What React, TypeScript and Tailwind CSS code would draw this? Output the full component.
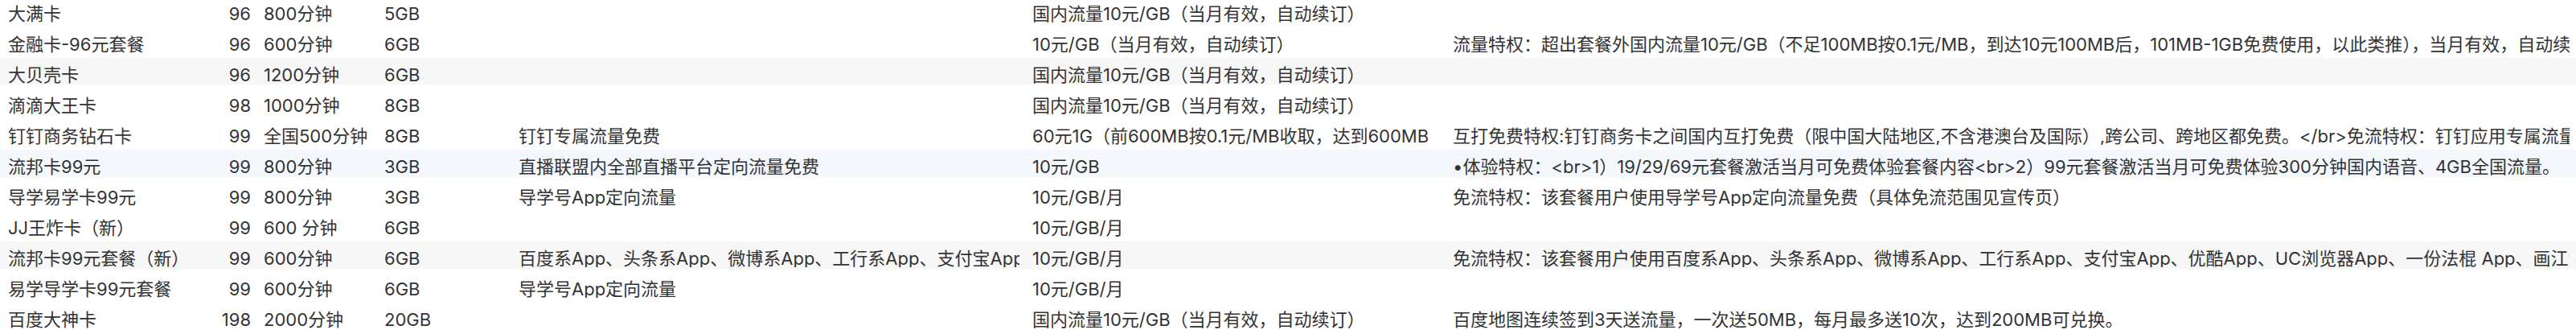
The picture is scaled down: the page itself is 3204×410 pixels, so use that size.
import React from 'react'

type Plan = {
  name: string
  price: string
  minutes: string
  data: string
  free: string
  extra: string
  perk: string
  tint?: 'grey' | 'blue'
}

const plans: Plan[] = [
  { name: '大满卡', price: '96', minutes: '800分钟', data: '5GB', free: '', extra: '国内流量10元/GB（当月有效，自动续订）', perk: '' },
  {
    name: '金融卡-96元套餐',
    price: '96',
    minutes: '600分钟',
    data: '6GB',
    free: '',
    extra: '10元/GB（当月有效，自动续订）',
    perk: '流量特权：超出套餐外国内流量10元/GB（不足100MB按0.1元/MB，到达10元100MB后，101MB-1GB免费使用，以此类推），当月有效，自动续订',
  },
  { name: '大贝壳卡', price: '96', minutes: '1200分钟', data: '6GB', free: '', extra: '国内流量10元/GB（当月有效，自动续订）', perk: '', tint: 'grey' },
  { name: '滴滴大王卡', price: '98', minutes: '1000分钟', data: '8GB', free: '', extra: '国内流量10元/GB（当月有效，自动续订）', perk: '' },
  {
    name: '钉钉商务钻石卡',
    price: '99',
    minutes: '全国500分钟',
    data: '8GB',
    free: '钉钉专属流量免费',
    extra: '60元1G（前600MB按0.1元/MB收取，达到600MB',
    perk: '互打免费特权:钉钉商务卡之间国内互打免费（限中国大陆地区,不含港澳台及国际）,跨公司、跨地区都免费。</br>免流特权：钉钉应用专属流量免费',
  },
  {
    name: '流邦卡99元',
    price: '99',
    minutes: '800分钟',
    data: '3GB',
    free: '直播联盟内全部直播平台定向流量免费',
    extra: '10元/GB',
    perk: '•体验特权：<br>1）19/29/69元套餐激活当月可免费体验套餐内容<br>2）99元套餐激活当月可免费体验300分钟国内语音、4GB全国流量。',
    tint: 'blue',
  },
  {
    name: '导学易学卡99元',
    price: '99',
    minutes: '800分钟',
    data: '3GB',
    free: '导学号App定向流量',
    extra: '10元/GB/月',
    perk: '免流特权：该套餐用户使用导学号App定向流量免费（具体免流范围见宣传页）',
  },
  { name: 'JJ王炸卡（新）', price: '99', minutes: '600 分钟', data: '6GB', free: '', extra: '10元/GB/月', perk: '' },
  {
    name: '流邦卡99元套餐（新）',
    price: '99',
    minutes: '600分钟',
    data: '6GB',
    free: '百度系App、头条系App、微博系App、工行系App、支付宝App、优酷App',
    extra: '10元/GB/月',
    perk: '免流特权：该套餐用户使用百度系App、头条系App、微博系App、工行系App、支付宝App、优酷App、UC浏览器App、一份法棍 App、画江湖App定向流量免费',
    tint: 'grey',
  },
  { name: '易学导学卡99元套餐', price: '99', minutes: '600分钟', data: '6GB', free: '导学号App定向流量', extra: '10元/GB/月', perk: '' },
  {
    name: '百度大神卡',
    price: '198',
    minutes: '2000分钟',
    data: '20GB',
    free: '',
    extra: '国内流量10元/GB（当月有效，自动续订）',
    perk: '百度地图连续签到3天送流量，一次送50MB，每月最多送10次，达到200MB可兑换。',
  },
]

// fixed-width table cell, text clipped at the content edge
function Cell({ className, children }: { className: string; children: React.ReactNode }) {
  return (
    <div className={'shrink-0 px-2 ' + className}>
      <div className="overflow-hidden whitespace-nowrap">{children}</div>
    </div>
  )
}

export default function App() {
  return (
    <div className="w-[3204px] h-[410px] overflow-hidden bg-white text-[#333333] text-[22px] font-['Inter','Noto_Sans_CJK_SC',sans-serif]">
      <div className="-mt-[4px] flex flex-col">
        {plans.map((p) => (
          <div
            key={p.name}
            className={
              'flex h-[38px] shrink-0 items-center border-b-[4px] border-white pt-[8px] leading-none ' +
              (p.tint === 'grey' ? 'bg-[#f7f7f7]' : p.tint === 'blue' ? 'bg-[#f4f7fc]' : 'bg-white')
            }
          >
            <Cell className="w-[232px] pl-[10px] pr-0">{p.name}</Cell>
            <Cell className="w-[88px] text-right">{p.price}</Cell>
            <Cell className="w-[150px]">{p.minutes}</Cell>
            <Cell className="w-[167px]">{p.data}</Cell>
            <Cell className="w-[639px]">{p.free}</Cell>
            <Cell className="w-[523px]">{p.extra}</Cell>
            <Cell className="flex-1 min-w-0">{p.perk}</Cell>
          </div>
        ))}
      </div>
    </div>
  )
}
